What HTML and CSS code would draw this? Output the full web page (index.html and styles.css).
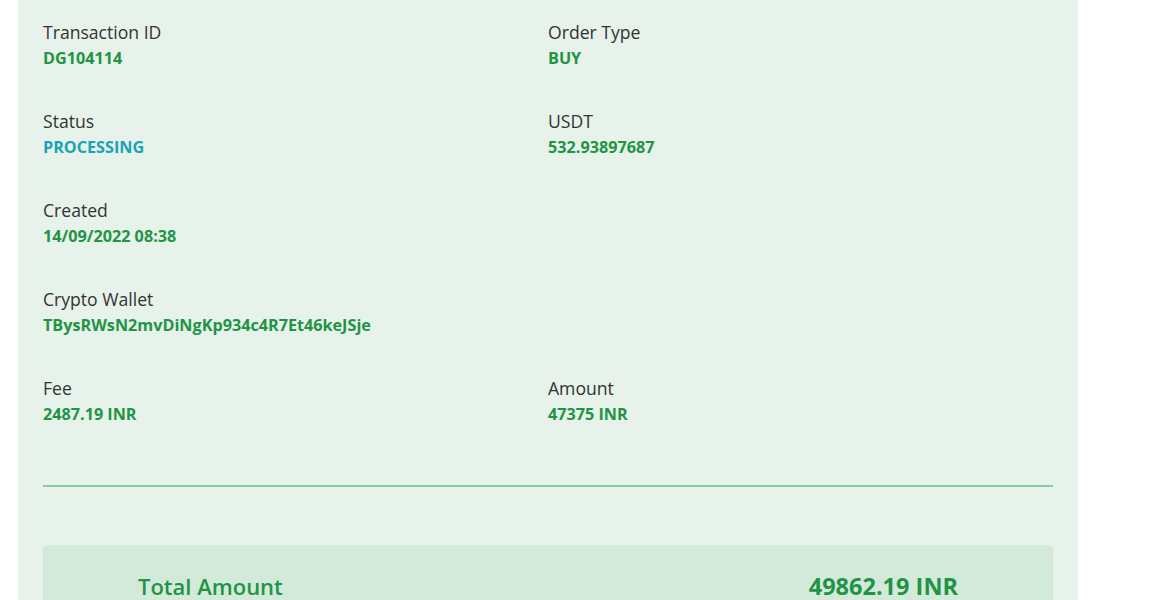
FILE: index.html
```html
<!DOCTYPE html>
<html lang="en">
<head>
<meta charset="utf-8">
<title>Transaction details</title>
<link rel="stylesheet" href="styles.css">
</head>
<body>
<div class="panel">
  <div class="details">
    <div class="item"><div class="label">Transaction ID</div><div class="value">DG104114</div></div>
    <div class="item"><div class="label">Order Type</div><div class="value">BUY</div></div>
    <div class="item"><div class="label">Status</div><div class="value info">PROCESSING</div></div>
    <div class="item"><div class="label">USDT</div><div class="value">532.93897687</div></div>
    <div class="item"><div class="label">Created</div><div class="value">14/09/2022 08:38</div></div>
    <div class="item"></div>
    <div class="item"><div class="label">Crypto Wallet</div><div class="value">TBysRWsN2mvDiNgKp934c4R7Et46keJSje</div></div>
    <div class="item"></div>
    <div class="item"><div class="label">Fee</div><div class="value">2487.19 INR</div></div>
    <div class="item"><div class="label">Amount</div><div class="value">47375 INR</div></div>
  </div>
  <hr class="divider">
  <div class="total">
    <span class="total-label">Total Amount</span>
    <span class="total-value">49862.19 INR</span>
  </div>
</div>
</body>
</html>
```
FILE: styles.css
```css
html, body {
  margin: 0;
  padding: 0;
  background: #ffffff;
  font-family: "Open Sans", "Noto Sans", "Liberation Sans", sans-serif;
}
.panel {
  margin-left: 18px;
  width: 1060px;
  box-sizing: border-box;
  background: #e6f2ea;
  padding: 18px 25px 60px;
}
.details {
  display: grid;
  grid-template-columns: 1fr 1fr;
  row-gap: 37px;
}
.item {
  min-height: 52px;
}
.label {
  font-size: 17.6px;
  line-height: 28px;
  color: #333333;
}
.value {
  font-size: 16.2px;
  line-height: 24px;
  font-weight: 700;
  color: #1f9445;
}
.value.info {
  color: #1aa2b7;
}
.divider {
  border: 0;
  height: 2px;
  background: #8ec9a0;
  margin: 59px 0 58px;
}
.total {
  background: #d3eadb;
  border-radius: 5px;
  padding: 25px 95px 40px;
  display: flex;
  justify-content: space-between;
  align-items: center;
  color: #1f9445;
}
.total-label {
  font-size: 22px;
  font-weight: 600;
  line-height: 33px;
}
.total-value {
  font-size: 23.5px;
  font-weight: 700;
  line-height: 33px;
}
```
